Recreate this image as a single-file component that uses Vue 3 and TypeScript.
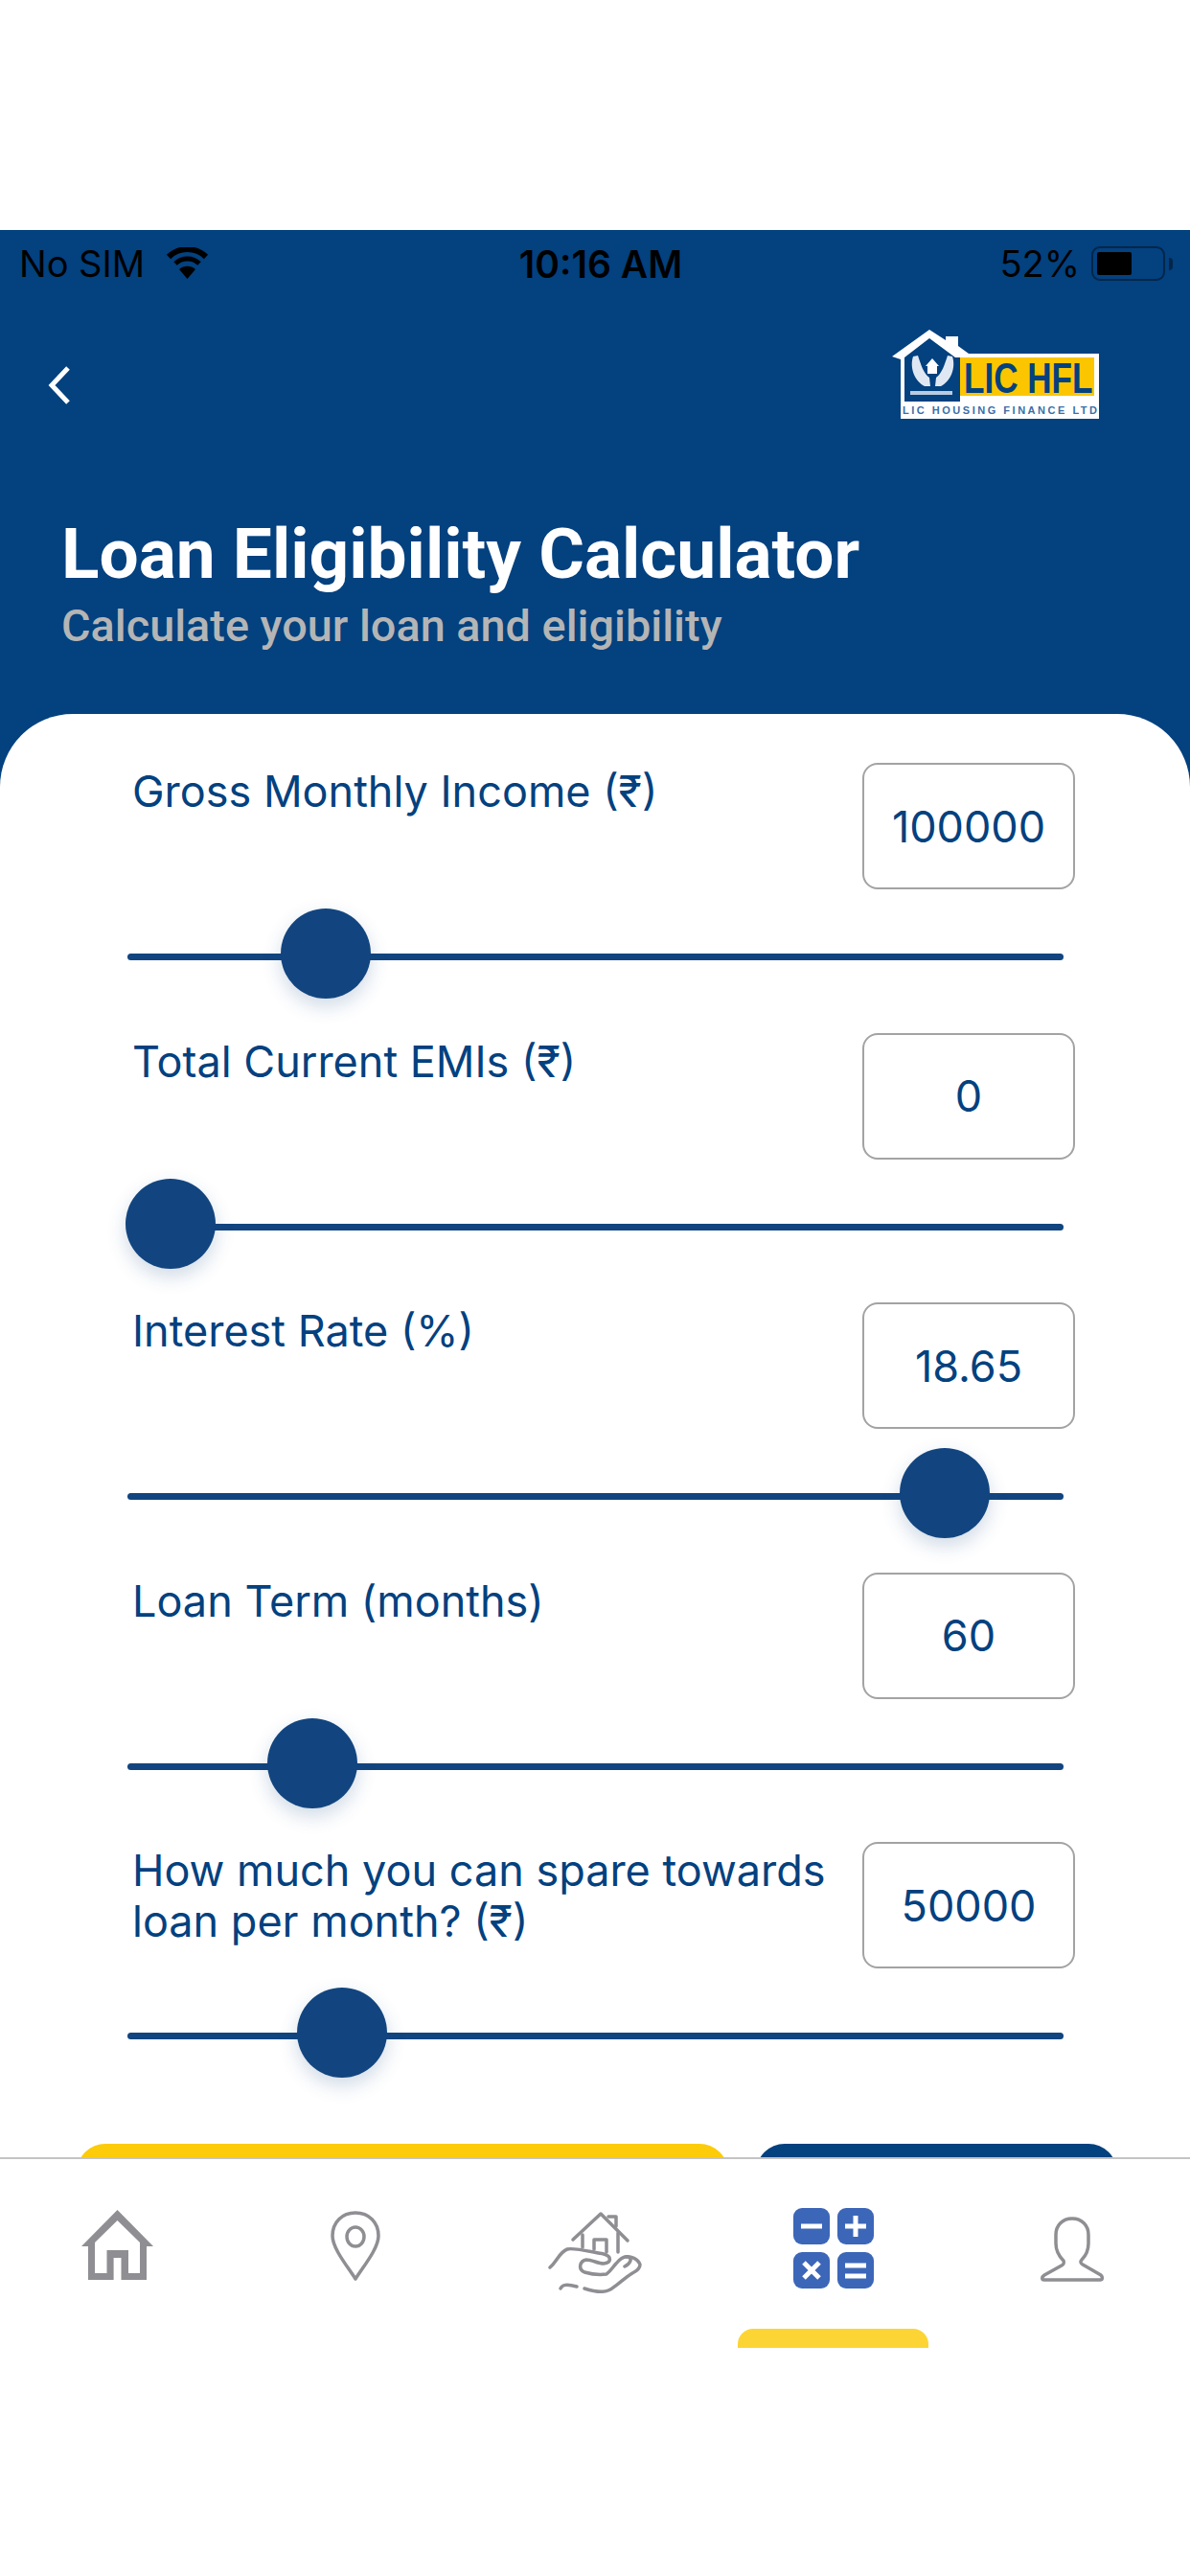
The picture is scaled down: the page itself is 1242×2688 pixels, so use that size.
<script setup lang="ts">
import { ref } from 'vue'

interface SliderRow {
  label: string
  value: string
  thumb: number
}

const rows = ref<SliderRow[]>([
  { label: 'Gross Monthly Income (₹)', value: '100000', thumb: 207 },
  { label: 'Total Current EMIs (₹)', value: '0', thumb: 45 },
  { label: 'Interest Rate (%)', value: '18.65', thumb: 853 },
  { label: 'Loan Term (months)', value: '60', thumb: 193 },
  { label: 'How much you can spare towards loan per month? (₹)', value: '50000', thumb: 224 },
])
</script>

<template>
  <div class="screen">
    <main class="main">
      <div class="status-bar">
        <div class="status-left">
          <span>No SIM</span>
          <svg width="45" height="34" viewBox="0 0 45 34" aria-hidden="true">
            <path d="M22.5 33 L14 23 A13 13 0 0 1 31 23 Z" fill="#000" />
            <path d="M10 17 A18 18 0 0 1 35 17" fill="none" stroke="#000" stroke-width="5" />
            <path d="M3 10 A28 28 0 0 1 42 10" fill="none" stroke="#000" stroke-width="6" />
          </svg>
        </div>
        <span class="status-time">10:16 AM</span>
        <div class="status-right">
          <span>52%</span>
          <div class="battery"><div class="battery-fill"></div></div>
          <div class="battery-cap"></div>
        </div>
      </div>

      <header class="header">
        <div class="top-row">
          <svg class="back" width="24" height="40" viewBox="0 0 24 40" aria-label="Back">
            <path d="M22 2 L5 20 L22 38" fill="none" stroke="#fff" stroke-width="5" />
          </svg>
          <svg class="logo" width="216" height="93" viewBox="0 0 216 93" aria-label="LIC HFL">
            <path d="M0 28 L39 0 L56 11 L56 7 L69 7 L69 17 L80 25 L217 25 L217 93 L9 93 L9 31 Z" fill="#fff" />
            <path d="M13 29 L39 9 L66 29 L71 29 L71 75 L13 75 Z" fill="#03417f" />
            <rect x="71" y="29" width="140" height="40" fill="#fbc600" />
            <path d="M22 28 C18 40 24 54 34 59 L40 59 L39 50 C33 46 30 36 27 27 Z" fill="#dfe8f2" />
            <path d="M63 28 C67 40 61 54 51 59 L45 59 L46 50 C52 46 55 36 58 27 Z" fill="#dfe8f2" />
            <path d="M42 30 L49 38 L47 38 L47 46 L37 46 L37 38 L35 38 Z" fill="#fff" />
            <rect x="19" y="64" width="44" height="4" fill="#b9cbe0" />
            <text transform="translate(75 66) scale(0.78 1)" class="logo-main">LIC HFL</text>
            <text x="11" y="88" textLength="203" class="logo-sub">LIC HOUSING FINANCE LTD</text>
          </svg>
        </div>
        <h1 class="title">Loan Eligibility Calculator</h1>
        <p class="subtitle">Calculate your loan and eligibility</p>
      </header>

      <section class="card">
        <div v-for="row in rows" :key="row.label" class="row">
          <div class="row-top">
            <label class="row-label">{{ row.label }}</label>
            <div class="value-box">{{ row.value }}</div>
          </div>
          <div class="slider">
            <div class="track"></div>
            <div class="thumb" :style="{ left: row.thumb + 'px' }"></div>
          </div>
        </div>
        <div class="actions">
          <button class="btn btn-yellow" type="button"></button>
          <button class="btn btn-blue" type="button"></button>
        </div>
      </section>
    </main>

    <nav class="bottom-nav" aria-label="Main menu">
      <div class="nav-item">
        <svg width="76" height="75" viewBox="0 0 76 75" aria-label="Home">
          <path d="M37.5 0 L75 38 L68 38 L68 73 L41.5 73 L41.5 50 L33.6 50 L33.6 73 L7 73 L7 38 L0 38 Z M37.5 11 L14 34 L14 66 L26.5 66 L26.5 42 L49 42 L49 66 L61 66 L61 34 Z" fill="#8e8e93" fill-rule="evenodd" />
        </svg>
      </div>
      <div class="nav-item">
        <svg class="icon-pin" width="54" height="74" viewBox="0 0 54 74" aria-label="Branches">
          <path d="M27 71 C18 57 3 39 3 26 C3 12 13 2 27 2 C41 2 51 12 51 26 C51 39 36 57 27 71 Z" fill="none" stroke="#8e8e93" stroke-width="3.5" stroke-linejoin="round" />
          <ellipse cx="27" cy="27" rx="9" ry="10" fill="none" stroke="#8e8e93" stroke-width="3.5" />
        </svg>
      </div>
      <div class="nav-item">
        <svg class="icon-hand" width="104" height="90" viewBox="12 10 104 90" aria-label="Loans">
          <g fill="none" stroke="#8e8e93" stroke-width="3.5" stroke-linecap="round" stroke-linejoin="round">
            <path d="M38 42 L67 15 L95 43" />
            <path d="M75 18 L83 18 L83 28" />
            <path d="M48 37 L48 50" />
            <path d="M85 35 L85 55" />
            <path d="M60 52 L60 42 L73 42 L73 55" />
            <path d="M14 71 C21 65 24 55 32 52 C38 50 58 55 70 57 C78 59 79 66 70 67 C64 67 58 63 52 63 C45 64 43 73 50 76 C57 78 66 79 73 78 C78 74 80 70 83 67 C87 62 92 59 96 60 C100 62 98 67 92 70" />
            <path d="M93 60 C98 59 106 62 108 68 C108 72 104 75 100 77 C92 82 86 88 80 92 C74 97 66 98 50 93" />
            <path d="M25 93 C27 89 31 88 42 91" />
          </g>
        </svg>
      </div>
      <div class="nav-item">
        <div class="calc-grid" aria-label="Calculator">
          <div class="calc-key">
            <svg width="38" height="38" viewBox="0 0 38 38"><path d="M8 19 H30" stroke="#fff" stroke-width="5" /></svg>
          </div>
          <div class="calc-key">
            <svg width="38" height="38" viewBox="0 0 38 38"><path d="M8 19 H30 M19 8 V30" stroke="#fff" stroke-width="5" /></svg>
          </div>
          <div class="calc-key">
            <svg width="38" height="38" viewBox="0 0 38 38"><path d="M11 11 L27 27 M27 11 L11 27" stroke="#fff" stroke-width="5" /></svg>
          </div>
          <div class="calc-key">
            <svg width="38" height="38" viewBox="0 0 38 38"><path d="M8 14 H30 M8 25 H30" stroke="#fff" stroke-width="5" /></svg>
          </div>
        </div>
        <div class="nav-indicator"></div>
      </div>
      <div class="nav-item">
        <svg width="68" height="68" viewBox="0 0 68 68" aria-label="Profile">
          <path d="M34 2 C24 2 17 9 17 19 L17 28 C17 36 20 41 25 46 C26 48 25 50 23 51 L5 61 C2 63 2 66 5 66 L63 66 C66 66 66 63 64 61 L45 50 C43 49 42 47 44 45 C48 41 51 36 51 28 L51 19 C51 9 44 2 34 2 Z" fill="none" stroke="#8e8e93" stroke-width="3.5" stroke-linejoin="round" />
        </svg>
      </div>
    </nav>
  </div>
</template>

<style>
html,
body {
  margin: 0;
  background: #fff;
}
</style>

<style scoped>
.screen {
  width: 1242px;
  height: 2688px;
  padding-top: 240px;
  box-sizing: border-box;
  display: flex;
  flex-direction: column;
  overflow: hidden;
  background: #fff;
  font-family: Roboto, "Noto Sans", sans-serif;
}

.main {
  flex: 1;
  min-height: 0;
  display: flex;
  flex-direction: column;
  background: #03417f;
}

.status-bar {
  height: 70px;
  padding: 0 8px 0 20px;
  display: grid;
  grid-template-columns: 1fr auto 1fr;
  align-items: center;
  color: #000;
  font-family: Inter, "Liberation Sans", sans-serif;
  font-size: 38px;
}

.status-left {
  display: flex;
  align-items: center;
  gap: 22px;
}

.status-time {
  font-size: 39px;
  font-weight: 600;
}

.status-right {
  display: flex;
  align-items: center;
  justify-content: flex-end;
  margin-right: 10px;
}

.battery {
  width: 77px;
  height: 36px;
  margin-left: 12px;
  padding: 4px;
  box-sizing: border-box;
  border: 2px solid #02264a;
  border-radius: 9px;
}

.battery-fill {
  width: 36px;
  height: 100%;
  background: #000;
  border-radius: 2px;
}

.battery-cap {
  width: 4px;
  height: 13px;
  margin-left: 4px;
  background: #02264a;
  border-radius: 0 6px 6px 0;
}

.header {
  height: 435px;
  padding: 0 0 0 64px;
  box-sizing: border-box;
  color: #fff;
}

.top-row {
  height: 227px;
  display: flex;
  justify-content: space-between;
  align-items: flex-start;
}

.back {
  margin: 72px 0 0 -15px;
}

.logo {
  margin: 34px 95px 0 0;
}

.logo-main {
  font-family: "Liberation Sans", sans-serif;
  font-weight: 700;
  font-size: 45px;
  fill: #03417f;
}

.logo-sub {
  font-family: "Liberation Sans", sans-serif;
  font-weight: 700;
  font-size: 11px;
  fill: #3b6ea8;
}

.title {
  margin: 0;
  font-size: 73px;
  line-height: 82px;
  font-weight: 700;
}

.subtitle {
  margin: 8px 0 0;
  font-size: 46.8px;
  line-height: 52px;
  font-weight: 500;
  color: #b5b5b5;
}

.card {
  flex: 1;
  min-height: 0;
  overflow: hidden;
  padding: 51px 0 0;
  background: #fff;
  border-radius: 76px 76px 0 0;
  color: #03417f;
}

.row {
  height: 281.6px;
}

.row-top {
  display: flex;
  justify-content: space-between;
  align-items: flex-start;
  padding: 0 120px 0 138px;
}

.row-label {
  width: 730px;
  padding-top: 3px;
  font-family: Inter, Roboto, sans-serif;
  font-size: 45px;
  line-height: 53px;
}

.value-box {
  width: 222px;
  height: 132px;
  box-sizing: border-box;
  display: flex;
  align-items: center;
  justify-content: center;
  border: 2px solid #a3a3a3;
  border-radius: 16px;
  font-family: Inter, Roboto, sans-serif;
  font-size: 45px;
}

.slider {
  position: relative;
  height: 94px;
  margin: 20px 132px 0 133px;
  display: flex;
  align-items: center;
}

.track {
  width: 100%;
  height: 7px;
  margin-top: 7px;
  background: #12457f;
  border-radius: 4px;
}

.thumb {
  position: absolute;
  top: 0;
  width: 94px;
  height: 94px;
  margin-left: -47px;
  background: #12457f;
  border-radius: 50%;
  box-shadow: 0 8px 20px rgba(20, 70, 130, 0.2);
}

.actions {
  margin-top: 33px;
  padding: 0 76px 0 80px;
  display: flex;
  gap: 29px;
}

.btn {
  height: 100px;
  border: 0;
  padding: 0;
  border-radius: 30px;
}

.btn-yellow {
  width: 680px;
  background: #fccb0a;
}

.btn-blue {
  width: 377px;
  background: #03417f;
}

.bottom-nav {
  height: 437px;
  box-sizing: border-box;
  flex-shrink: 0;
  display: grid;
  grid-template-columns: 245px 250px 250px 250px 247px;
  border-top: 2px solid #c4c4c4;
  background: #fff;
}

.nav-item {
  position: relative;
  height: 128px;
  display: flex;
  align-items: flex-end;
  justify-content: center;
}

.icon-pin {
  margin-left: 2px;
}

.icon-hand {
  margin: 0 0 -14px 8px;
}

.calc-grid {
  display: grid;
  grid-template-columns: 38px 38px;
  grid-template-rows: 38px 38px;
  gap: 8px;
  margin-bottom: -7px;
}

.calc-key {
  background: #3c66b8;
  border-radius: 9px;
  display: flex;
}

.nav-indicator {
  position: absolute;
  left: 25px;
  top: 177px;
  width: 199px;
  height: 20px;
  background: #fcd535;
  border-radius: 16px 16px 0 0;
}
</style>
